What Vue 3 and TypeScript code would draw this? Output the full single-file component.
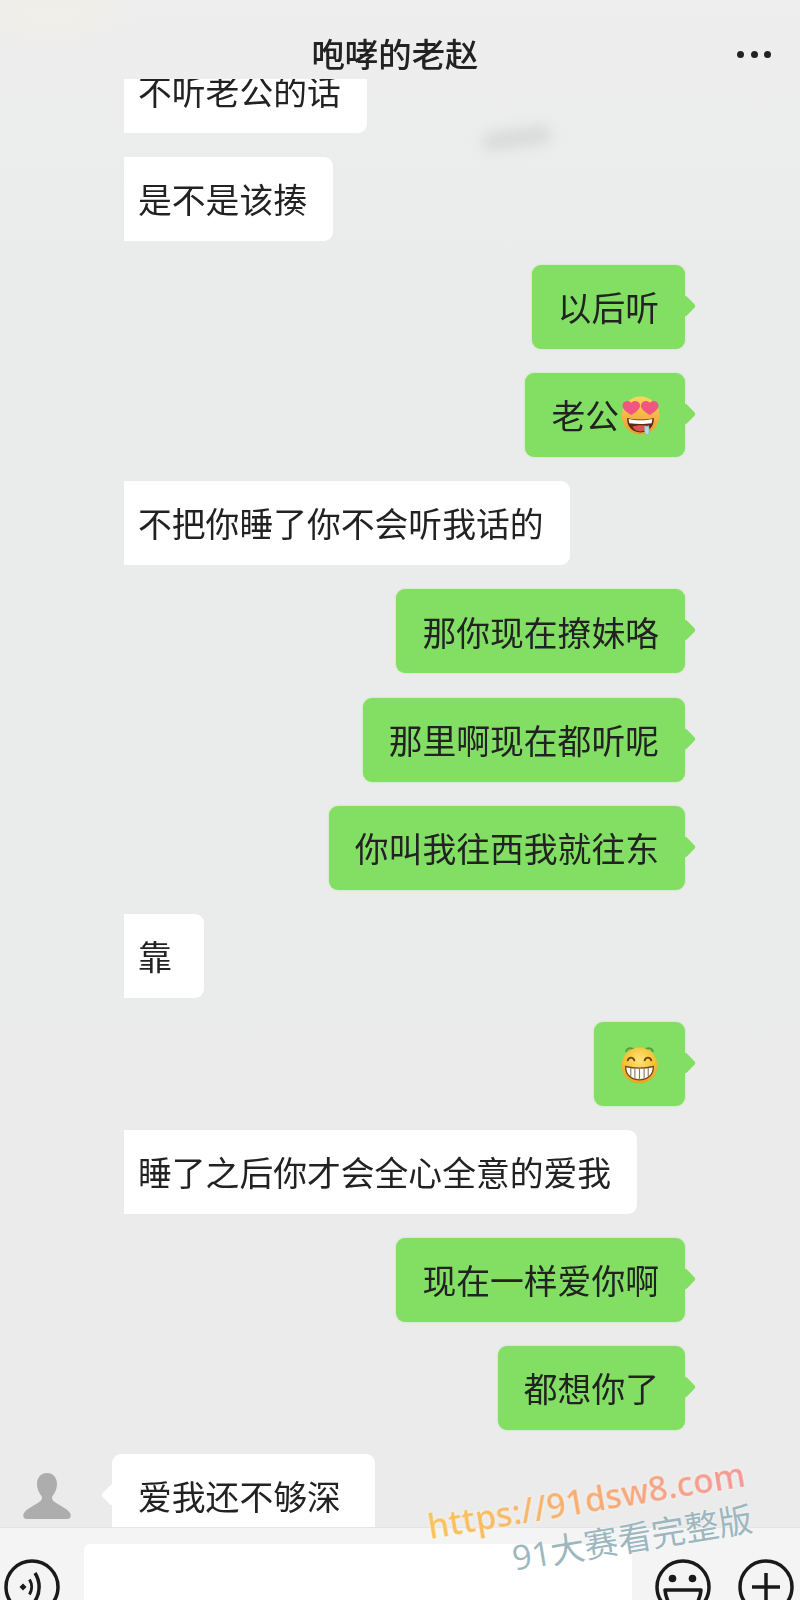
<script setup lang="ts">
type Emoji = 'love' | 'grin'

interface Message {
  id: number
  from: 'them' | 'me'
  text: string
  emoji?: Emoji
  avatar?: boolean
}

const messages: Message[] = [
  { id: 1, from: 'them', text: '不听老公的话' },
  { id: 2, from: 'them', text: '是不是该揍' },
  { id: 3, from: 'me', text: '以后听' },
  { id: 4, from: 'me', text: '老公', emoji: 'love' },
  { id: 5, from: 'them', text: '不把你睡了你不会听我话的' },
  { id: 6, from: 'me', text: '那你现在撩妹咯' },
  { id: 7, from: 'me', text: '那里啊现在都听呢' },
  { id: 8, from: 'me', text: '你叫我往西我就往东' },
  { id: 9, from: 'them', text: '靠' },
  { id: 10, from: 'me', text: '', emoji: 'grin' },
  { id: 11, from: 'them', text: '睡了之后你才会全心全意的爱我' },
  { id: 12, from: 'me', text: '现在一样爱你啊' },
  { id: 13, from: 'me', text: '都想你了' },
  { id: 14, from: 'them', text: '爱我还不够深', avatar: true },
]
</script>

<template>
  <div class="screen">
    <header class="topbar">
      <h1 class="title">咆哮的老赵</h1>
      <div class="more"><i></i><i></i><i></i></div>
    </header>

    <main class="chat">
      <div class="smudge"></div>
      <div class="list">
        <div
          v-for="msg in messages"
          :key="msg.id"
          class="row"
          :class="[msg.from, { 'has-avatar': msg.avatar }]"
        >
          <svg v-if="msg.avatar" class="avatar" viewBox="0 0 48 46">
            <path
              fill="#adadad"
              d="M24 0c-6 0-10 4.500-10 11 0 5 2 9 4.500 12 .8 1.500.5 3.500-1 5C13 32 2 36 .5 41c-.7 2.500.5 5 3 5h41c2.500 0 3.700-2.500 3-5C46 36 35 32 30.500 28c-1.500-1.500-1.800-3.500-1-5C32 20 34 16 34 11c0-6.500-4-11-10-11z"
            />
          </svg>
          <div class="bubble">
            <span v-if="msg.text">{{ msg.text }}</span>
            <svg v-if="msg.emoji === 'love'" class="emoji love" viewBox="0 0 38 38">
              <defs>
                <linearGradient id="loveFace" x1="0" y1="0" x2="0" y2="1">
                  <stop offset="0" stop-color="#fbd65a" />
                  <stop offset="1" stop-color="#ee9a2e" />
                </linearGradient>
              </defs>
              <circle cx="19" cy="19" r="18.500" fill="url(#loveFace)" />
              <path fill="#5a2a14" d="M6 21.500c8 2 18 2 26 0 .5 8-5 14-13 14S5.500 29.500 6 21.500z" />
              <path fill="#fff" d="M7.500 22.500c7 1.600 16 1.600 23 0 0 1.500-.2 3-.7 4-6.500 1-15 1-21.600 0-.5-1-.7-2.500-.7-4z" />
              <path fill="#d9574f" d="M11 30c5-2 11-2 16 0-2 3-4.500 4.500-8 4.500s-6-1.500-8-4.500z" />
              <path fill="#f0567f" d="M10 18.500C4.500 15.500 1 12 1.500 8.500 2 5 7.500 3.500 10 6.800c2.500-3.300 8-1.800 8.500 1.700.5 3.500-3 7-8.500 10zM28 18.500c-5.500-3-9-6.500-8.500-10C20 5 25.500 3.500 28 6.800c2.500-3.300 8-1.800 8.500 1.700.5 3.500-3 7-8.500 10z" />
              <path fill="#b5dbe2" stroke="#7fa9b2" stroke-width=".6" d="M23 29c1.500.5 3 .5 4-.2.5 3 .8 6 .2 8.200-.8 1-3 1-3.600 0-.8-2.500-.6-5.500-.6-8z" />
            </svg>
            <svg v-if="msg.emoji === 'grin'" class="emoji grin" viewBox="0 0 38 38">
              <defs>
                <radialGradient id="grinFace" cx="0.5" cy="0.35" r="0.7">
                  <stop offset="0" stop-color="#fde37a" />
                  <stop offset="0.6" stop-color="#f6c232" />
                  <stop offset="1" stop-color="#e89a26" />
                </radialGradient>
              </defs>
              <path fill="none" stroke="#5f9a3c" stroke-width="2" stroke-linecap="round" d="M6 6c1-3 5-4 8-1M24 5c3-3 7-2 8 1" />
              <circle cx="19" cy="20" r="17.500" fill="url(#grinFace)" />
              <path fill="none" stroke="#6b4410" stroke-width="1.800" stroke-linecap="round" d="M7.500 15c1.500-3.500 5-3.500 6.500 0M24 15c1.500-3.500 5-3.500 6.500 0" />
              <path fill="#fff" stroke="#7a4d12" stroke-width="1.400" d="M5.500 21c8 1.800 19 1.800 27 0 .3 7.500-5 13-13.500 13S5.200 28.500 5.500 21z" />
              <path fill="none" stroke="#8a7a55" stroke-width="1.100" d="M10.500 22.500v8M14.500 23v10M19 23v11M23.500 23v10M27.500 22.500v8" />
            </svg>
          </div>
        </div>
      </div>
    </main>

    <footer class="inputbar">
      <svg class="tool" viewBox="0 0 56 56">
        <circle cx="28" cy="28" r="26" fill="none" stroke="#1a1a1a" stroke-width="3.500" />
        <path fill="#1a1a1a" d="M19 24.500l3.500 3.500-3.500 3.500-3.500-3.500z" />
        <path fill="none" stroke="#1a1a1a" stroke-width="3" d="M25.500 20.500c2.800 4.500 2.800 10.500 0 15" />
        <path fill="none" stroke="#1a1a1a" stroke-width="3.500" d="M31 14c5.500 8.500 5.500 19.500 0 28" />
      </svg>
      <div class="field"></div>
      <svg class="tool" viewBox="0 0 56 56">
        <circle cx="28" cy="28" r="26" fill="none" stroke="#1a1a1a" stroke-width="3.500" />
        <circle cx="17.500" cy="19.500" r="3.800" fill="#1a1a1a" />
        <circle cx="37.500" cy="19.500" r="3.800" fill="#1a1a1a" />
        <path fill="none" stroke="#1a1a1a" stroke-width="3.500" stroke-linejoin="round" d="M10 31h36c-.5 6-3 12-6 16H16c-3-4-5.500-10-6-16z" />
      </svg>
      <svg class="tool" viewBox="0 0 56 56">
        <circle cx="28" cy="28" r="26" fill="none" stroke="#1a1a1a" stroke-width="3.500" />
        <path fill="none" stroke="#1a1a1a" stroke-width="3.500" d="M28 14v30M14 28h28" />
      </svg>
    </footer>

    <div class="watermark">
      <div class="wm-url">https://91dsw8.com</div>
      <div class="wm-text">91大赛看完整版</div>
    </div>
  </div>
</template>

<style>
body {
  margin: 0;
}
</style>

<style scoped>
.screen {
  position: relative;
  width: 800px;
  height: 1600px;
  overflow: hidden;
  display: flex;
  flex-direction: column;
  background:
    radial-gradient(ellipse 90px 30px at 50px 15px, #f1efe8, transparent),
    linear-gradient(180deg, #eeeeee 0, #eaebeb 260px, #ebebeb 100%);
  color: #222;
  font-family: "Noto Sans CJK SC", "Liberation Sans", sans-serif;
}

.topbar {
  position: relative;
  flex: none;
  box-sizing: border-box;
  height: 79px;
  padding: 26px 10px 0 0;
  display: flex;
  align-items: center;
  justify-content: center;
}

.title {
  margin: 0;
  font-size: 33.400px;
  font-weight: 500;
  line-height: 1;
  color: #222;
  filter: blur(0.4px);
}

.more {
  position: absolute;
  right: 29px;
  top: 51px;
  display: flex;
  gap: 6.500px;
}

.more i {
  width: 7px;
  height: 7px;
  border-radius: 50%;
  background: #222;
}

.chat {
  position: relative;
  flex: 1;
  min-height: 0;
  overflow: hidden;
}

.smudge {
  position: absolute;
  left: 482px;
  top: 50px;
  width: 70px;
  height: 18px;
  border-radius: 9px;
  background: #d8dada;
  filter: blur(7px);
  transform: rotate(-8deg);
}

.list {
  position: relative;
  margin-top: -30px;
  display: flex;
  flex-direction: column;
  gap: 24.100px;
}

.row {
  display: flex;
  align-items: flex-start;
}

.row.them {
  padding-left: 124px;
}

.row.me {
  justify-content: flex-end;
  padding-right: 115px;
}

.row.has-avatar {
  padding-left: 23px;
  gap: 41px;
}

.avatar {
  flex: none;
  width: 48px;
  height: 46px;
  margin-top: 19px;
}

.bubble {
  position: relative;
  box-sizing: border-box;
  height: 84px;
  display: flex;
  align-items: center;
  font-size: 33.800px;
  line-height: 1;
  white-space: nowrap;
  filter: blur(0.4px);
}

.them .bubble {
  min-width: 80px;
  padding: 0 26px 0 14px;
  background: #ffffff;
  border-radius: 0 9px 9px 0;
}

.has-avatar .bubble {
  padding: 0 34px 0 26px;
  border-radius: 9px;
}

.has-avatar .bubble::before {
  content: "";
  position: absolute;
  left: -8px;
  top: 33px;
  width: 16px;
  height: 16px;
  background: #ffffff;
  transform: rotate(45deg);
  border-radius: 3px;
}

.me .bubble {
  padding: 0 26px 0 26px;
  background: #82df63;
  border-radius: 9px;
  box-shadow: 0 0 2px rgba(165, 236, 135, 0.9);
}

.me .bubble::after {
  content: "";
  position: absolute;
  right: -8px;
  top: 33px;
  width: 16px;
  height: 16px;
  background: #82df63;
  transform: rotate(45deg);
  border-radius: 3px;
}

.emoji {
  flex: none;
  width: 39px;
  height: 39px;
}

.emoji.love {
  margin-left: 2px;
  margin-right: -1px;
}

.emoji.grin {
  margin-top: 2px;
}

.inputbar {
  position: relative;
  flex: none;
  height: 73px;
  box-sizing: border-box;
  padding: 16px 6px 0 4px;
  display: flex;
  align-items: flex-start;
  background: #f4f4f4;
  border-top: 1px solid #e4e4e4;
  overflow: hidden;
}

.tool {
  flex: none;
  width: 56px;
  height: 56px;
  margin-top: 15px;
}

.field {
  flex: none;
  width: 548px;
  height: 70px;
  margin: 0 23px 0 24px;
  background: #ffffff;
  border-radius: 6px 6px 0 0;
}

.field + .tool + .tool {
  margin-left: 27px;
}

.watermark {
  position: absolute;
  right: 52px;
  top: 1452px;
  display: flex;
  flex-direction: column;
  align-items: flex-end;
  gap: 3px;
  transform: rotate(-9.500deg);
  transform-origin: right center;
  font-family: "Open Sans", "Noto Sans CJK SC", sans-serif;
}

.wm-url {
  font-size: 33.600px;
  font-weight: 600;
  line-height: 42px;
  white-space: nowrap;
  background: linear-gradient(90deg, #f9c45a, #f6ad72 50%, #f49898);
  -webkit-background-clip: text;
  background-clip: text;
  color: transparent;
  filter: drop-shadow(0 0 1px #ffffff);
}

.wm-text {
  font-size: 34px;
  line-height: 42px;
  white-space: nowrap;
  color: #9db7bf;
  text-shadow: 0 0 2px #ffffff;
}
</style>
